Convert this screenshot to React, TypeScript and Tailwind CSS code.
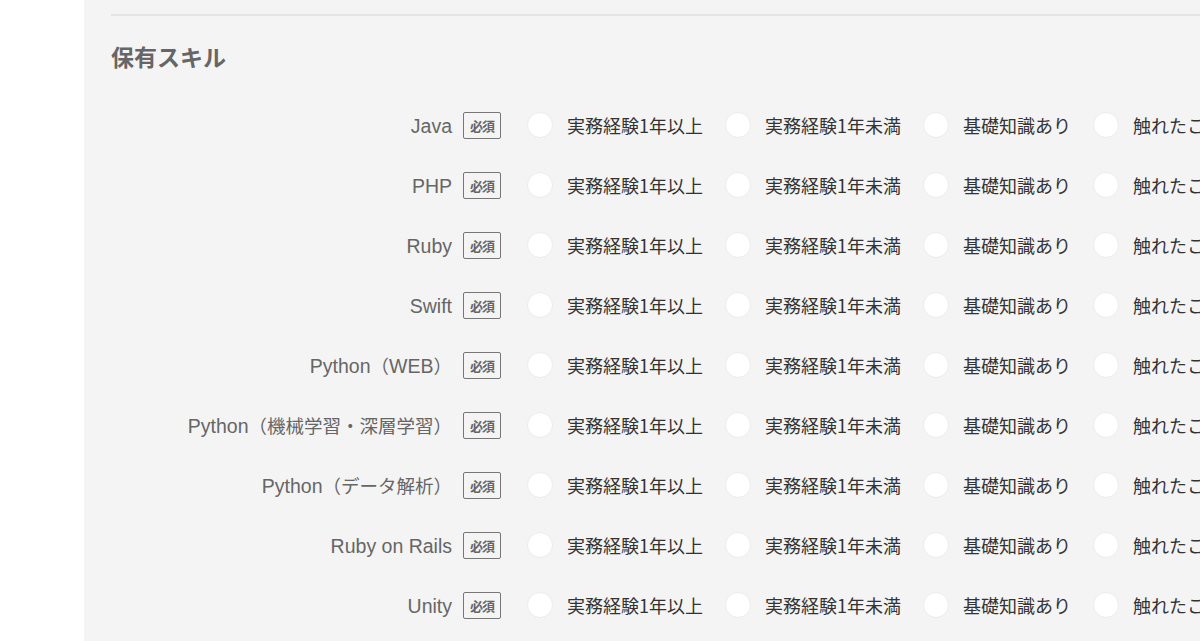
const skills = [
  'Java',
  'PHP',
  'Ruby',
  'Swift',
  'Python（WEB）',
  'Python（機械学習・深層学習）',
  'Python（データ解析）',
  'Ruby on Rails',
  'Unity',
];

const levels = ['実務経験1年以上', '実務経験1年未満', '基礎知識あり', '触れたことがある'];

// latin parts in a Helvetica-like face, japanese parts in Noto CJK
function SkillName({ name }: { name: string }) {
  const parts = name.split(/([\u3000-\u9fff\uff00-\uffef]+)/).filter(Boolean);
  return (
    <>
      {parts.map((p, i) =>
        /[\u3000-\u9fff\uff00-\uffef]/.test(p) ? (
          <span key={i} className="text-[18.5px]" style={{ fontFamily: '"Noto Sans CJK JP", sans-serif' }}>
            {p}
          </span>
        ) : (
          <span key={i} className="text-[19.5px]" style={{ fontFamily: '"Liberation Sans", Arial, sans-serif' }}>
            {p}
          </span>
        )
      )}
    </>
  );
}

function SkillRow({ name }: { name: string }) {
  return (
    <div className="flex h-[60px] items-center whitespace-nowrap">
      <div className="w-[341px] shrink-0 pt-[4px] text-right text-[#666]">
        <SkillName name={name} />
      </div>
      <span className="ml-[11px] flex h-[27px] w-[38px] shrink-0 items-center justify-center rounded-[2px] border border-[#777] text-[13px] leading-none font-bold tracking-[-1px] text-[#666]">
        必須
      </span>
      <div className="ml-[26px] flex items-center">
        {levels.map((lv) => (
          <label key={lv} className="mr-[22px] flex shrink-0 items-center last:mr-0">
            <span className="h-[26px] w-[26px] shrink-0 rounded-full border border-[#ececec] bg-white" />
            <span className="ml-[14px] text-[18px] text-[#333]">{lv}</span>
          </label>
        ))}
      </div>
    </div>
  );
}

export default function App() {
  return (
    <div
      className="flex h-[641px] w-[1200px] overflow-hidden bg-white"
      style={{ fontFamily: '"Noto Sans CJK JP", "Noto Sans", sans-serif' }}
    >
      <div className="w-[84px] shrink-0 bg-white" />
      <div className="flex-1 overflow-hidden bg-[#f4f4f4] pl-[27px]">
        <div className="mt-[14px] h-[2px] bg-[#e4e4e4]" />
        <h2 className="mt-[23px] text-[23px] leading-[34px] font-bold text-[#666]">保有スキル</h2>
        <div className="mt-[22px]">
          {skills.map((s) => (
            <SkillRow key={s} name={s} />
          ))}
        </div>
      </div>
    </div>
  );
}
